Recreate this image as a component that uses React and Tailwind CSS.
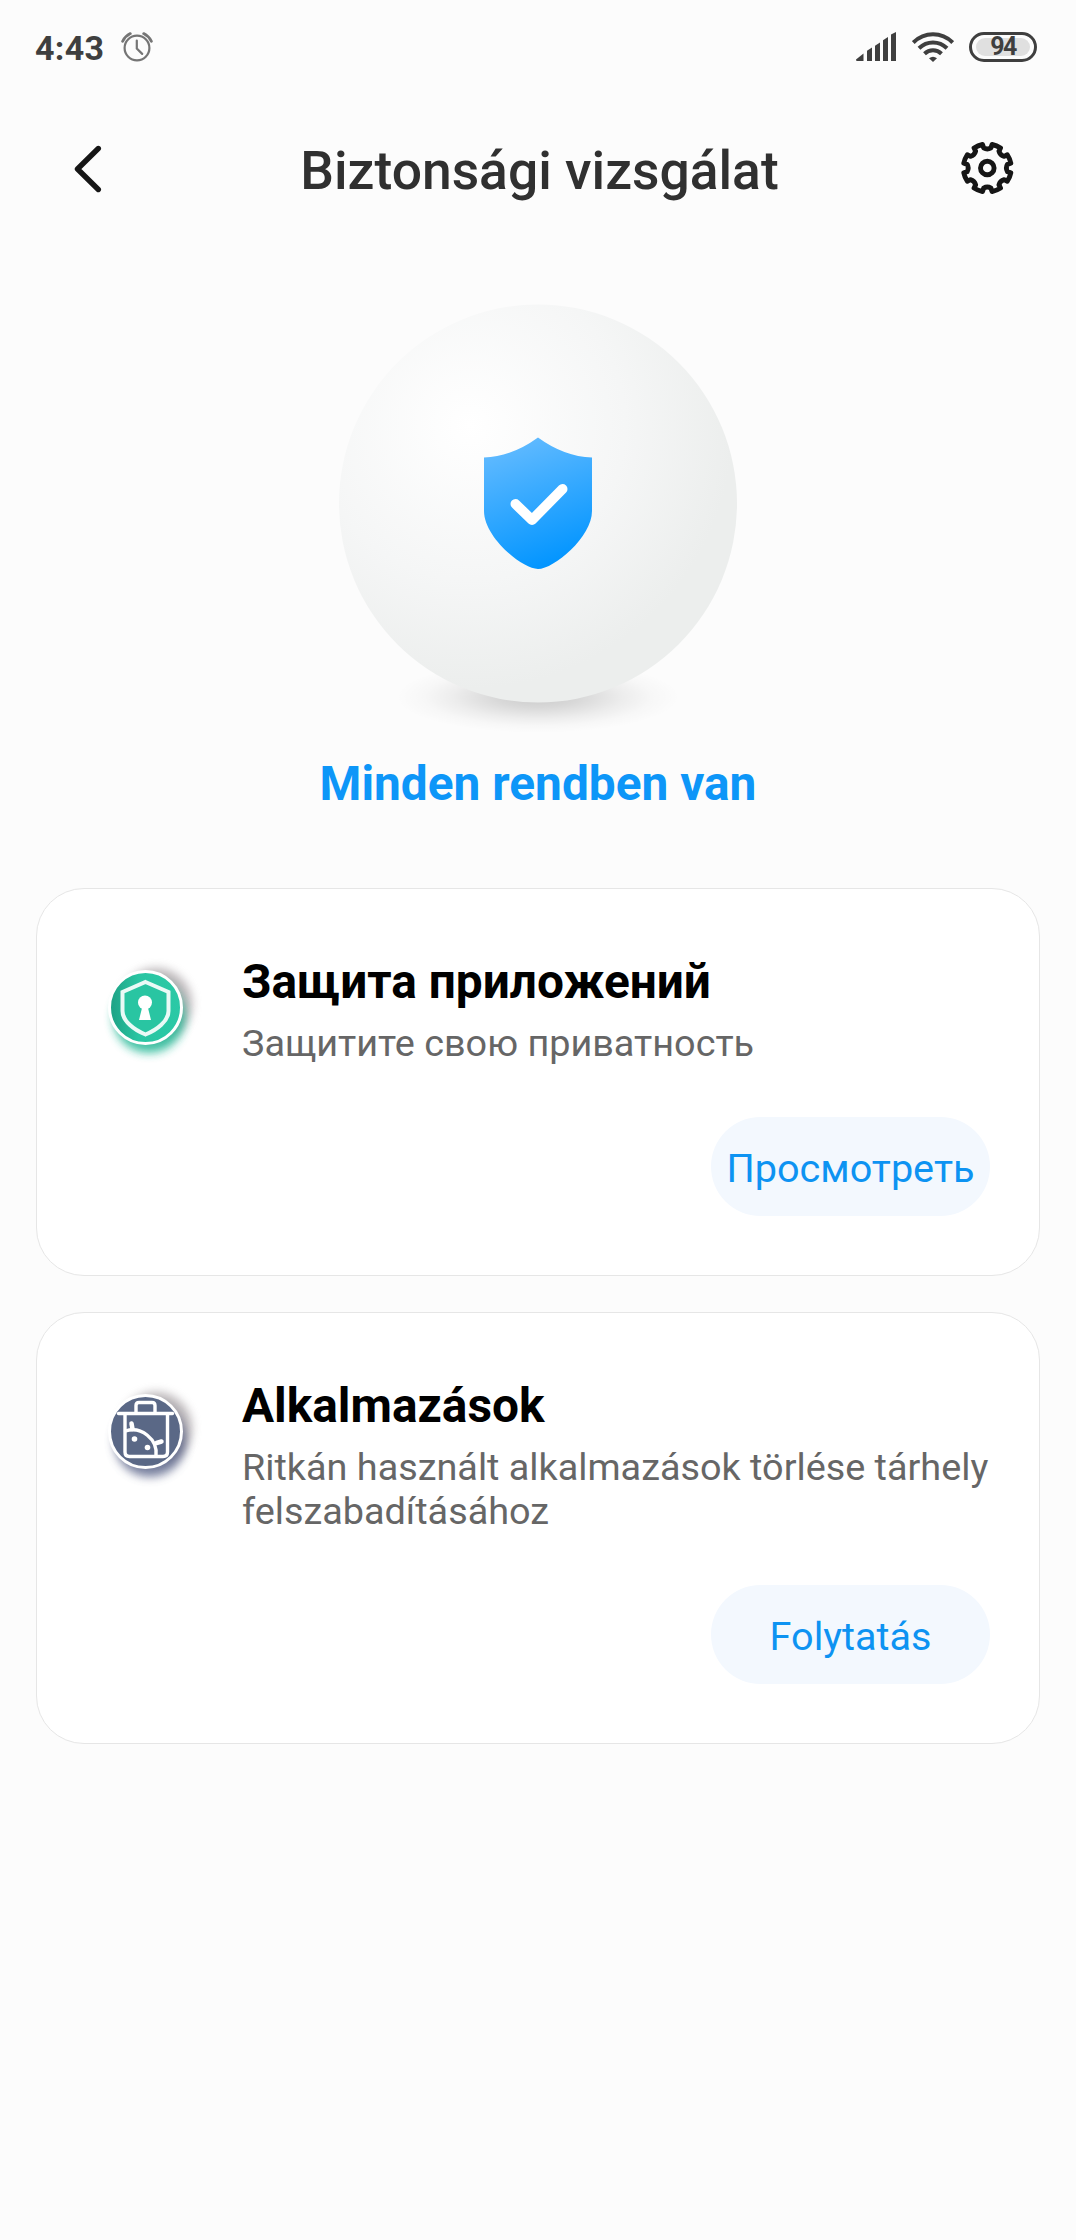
function StatusBar() {
  return (
    <div className="flex h-24 items-center justify-between pl-[35px] pr-[39px] text-[#3f3f3f]">
      <div className="flex items-center">
        <span className="w-[86px] text-[34px] font-bold leading-[49px] tracking-[0.3px]">4:43</span>
        <svg className="-mt-[3px] h-[30px] w-8" viewBox="0 0 32 30" fill="none" stroke="#757575" strokeWidth="2.2" strokeLinecap="round">
          <circle cx="16" cy="16" r="12.4" />
          <path d="M15.800 8.500v8l5.400 5.400" />
          <path d="M1.600 9.300C3.300 6 6 3.200 9.300 1.600" strokeWidth="2.800" />
          <path d="M30.400 9.300C28.700 6 26 3.200 22.700 1.600" strokeWidth="2.800" />
        </svg>
      </div>

      <div className="-mt-[3px] flex items-center">
        <svg className="h-[30px] w-10" viewBox="0 0 40 30" fill="currentColor">
          <path d="M0 27.500L7.500 21.500V29H1Q0 29 0 27.500z" />
          <path d="M11 18.800L16 15.500V29H11z" />
          <path d="M19 13.800L24 10.500V29H19z" />
          <path d="M27 8.300L32 5V29H27z" />
          <path d="M35 2.500L40 0V29H35z" />
        </svg>
        <svg className="ml-4 h-[30px] w-[42px]" viewBox="0 0 42 30" fill="none" stroke="currentColor" strokeWidth="4">
          <path d="M1.300 10.500C12.500-.5 29.500-.5 40.700 10.500" />
          <path d="M7 16.300C15 8.500 27 8.500 35 16.300" />
          <path d="M12.500 21.800C17.300 17.200 24.700 17.200 29.500 21.800" />
          <path d="M17 26.300Q21 23 25 26.300L21 30z" fill="currentColor" stroke="none" />
        </svg>
        <div className="ml-[15px] flex h-[30px] w-[68px] items-center justify-center rounded-full border-[3px] border-current">
          <span className="flex h-[18px] w-[54px] items-center justify-center rounded-full bg-[#e0e0e0] text-[25px] font-bold leading-none tracking-[-1.5px]">
            94
          </span>
        </div>
      </div>
    </div>
  );
}

// Outline of a cog with small notches between the teeth
function gearPath(teeth, outer, inner) {
  const step = (Math.PI * 2) / teeth;
  const pt = (r, a) => `${(r * Math.cos(a)).toFixed(2)} ${(r * Math.sin(a)).toFixed(2)}`;
  let d = "";
  for (let i = 0; i < teeth; i++) {
    const a = -Math.PI / 2 + i * step;
    d += `${i === 0 ? "M" : "L"}${pt(outer, a + 0.2)}`;
    d += `A${outer} ${outer} 0 0 1 ${pt(outer, a + step - 0.2)}`;
    d += `L${pt(inner + 1, a + step - 0.18)}`;
    d += `Q${pt(inner - 1.5, a + step)} ${pt(inner + 1, a + step + 0.18)}`;
  }
  return d + "Z";
}

function Header() {
  return (
    <header className="flex h-[150px] items-start pl-[74px] pr-[61px]">
      <button className="mt-[49px] h-[48px] w-7" aria-label="Vissza">
        <svg className="h-[48px] w-7" viewBox="0 0 28 48" fill="none" stroke="#161616" strokeWidth="5.400" strokeLinecap="round" strokeLinejoin="round">
          <path d="M24.300 3.500L3.500 24L24.300 44.500" />
        </svg>
      </button>
      <h1 className="mt-[40px] flex-1 pl-[16px] text-center text-[53.4px] font-medium leading-[70px] text-[#303030]">
        Biztonsági vizsgálat
      </h1>
      <button className="mt-[45px] h-[54px] w-[54px]" aria-label="Beállítások">
        <svg className="h-[54px] w-[54px]" viewBox="-26.300 -27 54 54" fill="none" stroke="#161616" strokeWidth="4.900" strokeLinejoin="round">
          <path d={gearPath(8, 24, 19.5)} />
          <circle r="6.800" />
        </svg>
      </button>
    </header>
  );
}

function Orb() {
  return (
    <svg className="h-[440px] w-[440px]" viewBox="0 0 440 440">
      <defs>
        <radialGradient id="orb" gradientUnits="userSpaceOnUse" cx="152" cy="131" r="310">
          <stop offset="0" stopColor="#ffffff" />
          <stop offset="0.5" stopColor="#f5f6f6" />
          <stop offset="0.85" stopColor="#eceeed" />
          <stop offset="1" stopColor="#eceeed" />
        </radialGradient>
        <radialGradient id="orbShadow">
          <stop offset="0" stopColor="#000" stopOpacity="0.2" />
          <stop offset="0.3" stopColor="#000" stopOpacity="0.14" />
          <stop offset="0.6" stopColor="#000" stopOpacity="0.06" />
          <stop offset="0.8" stopColor="#000" stopOpacity="0.02" />
          <stop offset="1" stopColor="#000" stopOpacity="0" />
        </radialGradient>
        <linearGradient id="shield" x1="0.3" y1="0" x2="0.6" y2="1">
          <stop offset="0" stopColor="#63bbff" />
          <stop offset="1" stopColor="#0094ff" />
        </linearGradient>
      </defs>
      <ellipse cx="220" cy="403" rx="142" ry="36" fill="url(#orbShadow)" />
      <circle cx="220" cy="209.500" r="199" fill="url(#orb)" />
      <path
        d="M220 143.500Q246 162.500 274 163.500V217C274 243 236 275 220 275C204 275 166 243 166 217V163.500Q194 162.500 220 143.500z"
        fill="url(#shield)"
      />
      <path d="M197.500 210L214 226L244.500 195" fill="none" stroke="#fff" strokeWidth="10" strokeLinecap="round" strokeLinejoin="round" />
    </svg>
  );
}

function PrivacyIcon() {
  return (
    <svg className="h-[120px] w-[120px]" viewBox="0 0 120 120">
      <defs>
        <filter id="soft" x="-30%" y="-30%" width="160%" height="160%">
          <feGaussianBlur stdDeviation="5" />
        </filter>
        <linearGradient id="green">
          <stop offset="0.05" stopColor="#1fa588" />
          <stop offset="0.4" stopColor="#29c5a2" />
          <stop offset="1" stopColor="#2bc9a6" />
        </linearGradient>
      </defs>
      <circle cx="66" cy="54" r="36" fill="#8d8589" opacity="0.6" filter="url(#soft)" />
      <circle cx="59" cy="67" r="36" fill="#20b794" opacity="0.85" filter="url(#soft)" />
      <circle cx="55.500" cy="57.500" r="36" fill="url(#green)" stroke="#fff" strokeWidth="3" />
      <path d="M55.500 32L78.500 42V61C78.500 71 67 80 55.500 84.500C44 80 32.500 71 32.500 61V42z" fill="#29c5a2" stroke="#eafaf6" strokeWidth="4" />
      <circle cx="55" cy="52.500" r="7" fill="#fff" />
      <path d="M52.500 56H57.500L61 70H49z" fill="#fff" />
    </svg>
  );
}

function TrashIcon() {
  return (
    <svg className="h-[120px] w-[120px]" viewBox="0 4 120 120">
      <circle cx="66" cy="58" r="36" fill="#8d8589" opacity="0.6" filter="url(#soft)" />
      <circle cx="60" cy="71" r="36" fill="#4e5880" opacity="0.75" filter="url(#soft)" />
      <circle cx="55.500" cy="61.500" r="36" fill="#5a6886" stroke="#fff" strokeWidth="3" />
      {/* bin, with the robot peeking out of the lower left corner */}
      <g fill="none" stroke="#fff" strokeWidth="3.400" strokeLinecap="round" strokeLinejoin="round">
        <path d="M28.500 43.500H82.500" />
        <path d="M46 43V35.500Q46 32.500 49 32.500H62Q65 32.500 65 35.500V43" />
        <path d="M35 44V82Q35 86.500 39.500 86.500H73Q77.500 86.500 77.500 82V44" />
        <path d="M35.500 61C51 56 68 69 66 86" />
        <path d="M42.500 59L41.500 53.500M66.500 73L71.500 71.500" strokeWidth="4.500" />
      </g>
      <circle cx="44.500" cy="69" r="2.800" fill="#fff" />
      <circle cx="57.500" cy="77.500" r="2.800" fill="#fff" />
    </svg>
  );
}

function Card({ icon, title, text, action }) {
  return (
    <section className="rounded-[48px] border border-[#e6e6e6] bg-white pb-[59px] pr-[49px] pt-[61px]">
      <div className="flex">
        <div className="w-[205px] shrink-0 pl-[53px]">{icon}</div>
        <div className="pb-[5px] pt-[3px]">
          <h2 className="whitespace-nowrap text-[47.8px] font-bold leading-[58px] text-black">{title}</h2>
          <p className="mt-[10px] whitespace-pre text-[37.8px] leading-[44px] text-[#666]">{text}</p>
        </div>
      </div>
      <div className="flex justify-end">
        <button className="mt-[47px] h-[99px] w-[279px] whitespace-nowrap rounded-full bg-[#f3f8fe] pt-[5px] text-[39.6px] text-[#0d93f2]">
          {action}
        </button>
      </div>
    </section>
  );
}

const cards = [
  {
    icon: <PrivacyIcon />,
    title: "Защита приложений",
    text: "Защитите свою приватность",
    action: "Просмотреть",
  },
  {
    icon: <TrashIcon />,
    title: "Alkalmazások",
    text: "Ritkán használt alkalmazások törlése tárhely\nfelszabadításához",
    action: "Folytatás",
  },
];

export default function App() {
  return (
    <div className="h-[2240px] w-[1076px] overflow-hidden bg-[#fcfcfc] font-[Roboto,sans-serif]">
      <StatusBar />
      <Header />
      <div className="flex h-[642px] flex-col items-center pt-12">
        <Orb />
        <p className="mt-[22px] text-[47.8px] font-bold leading-[56px] text-[#0d96f8]">Minden rendben van</p>
      </div>
      <main className="flex flex-col gap-9 px-9">
        {cards.map((card) => (
          <Card key={card.title} {...card} />
        ))}
      </main>
    </div>
  );
}
